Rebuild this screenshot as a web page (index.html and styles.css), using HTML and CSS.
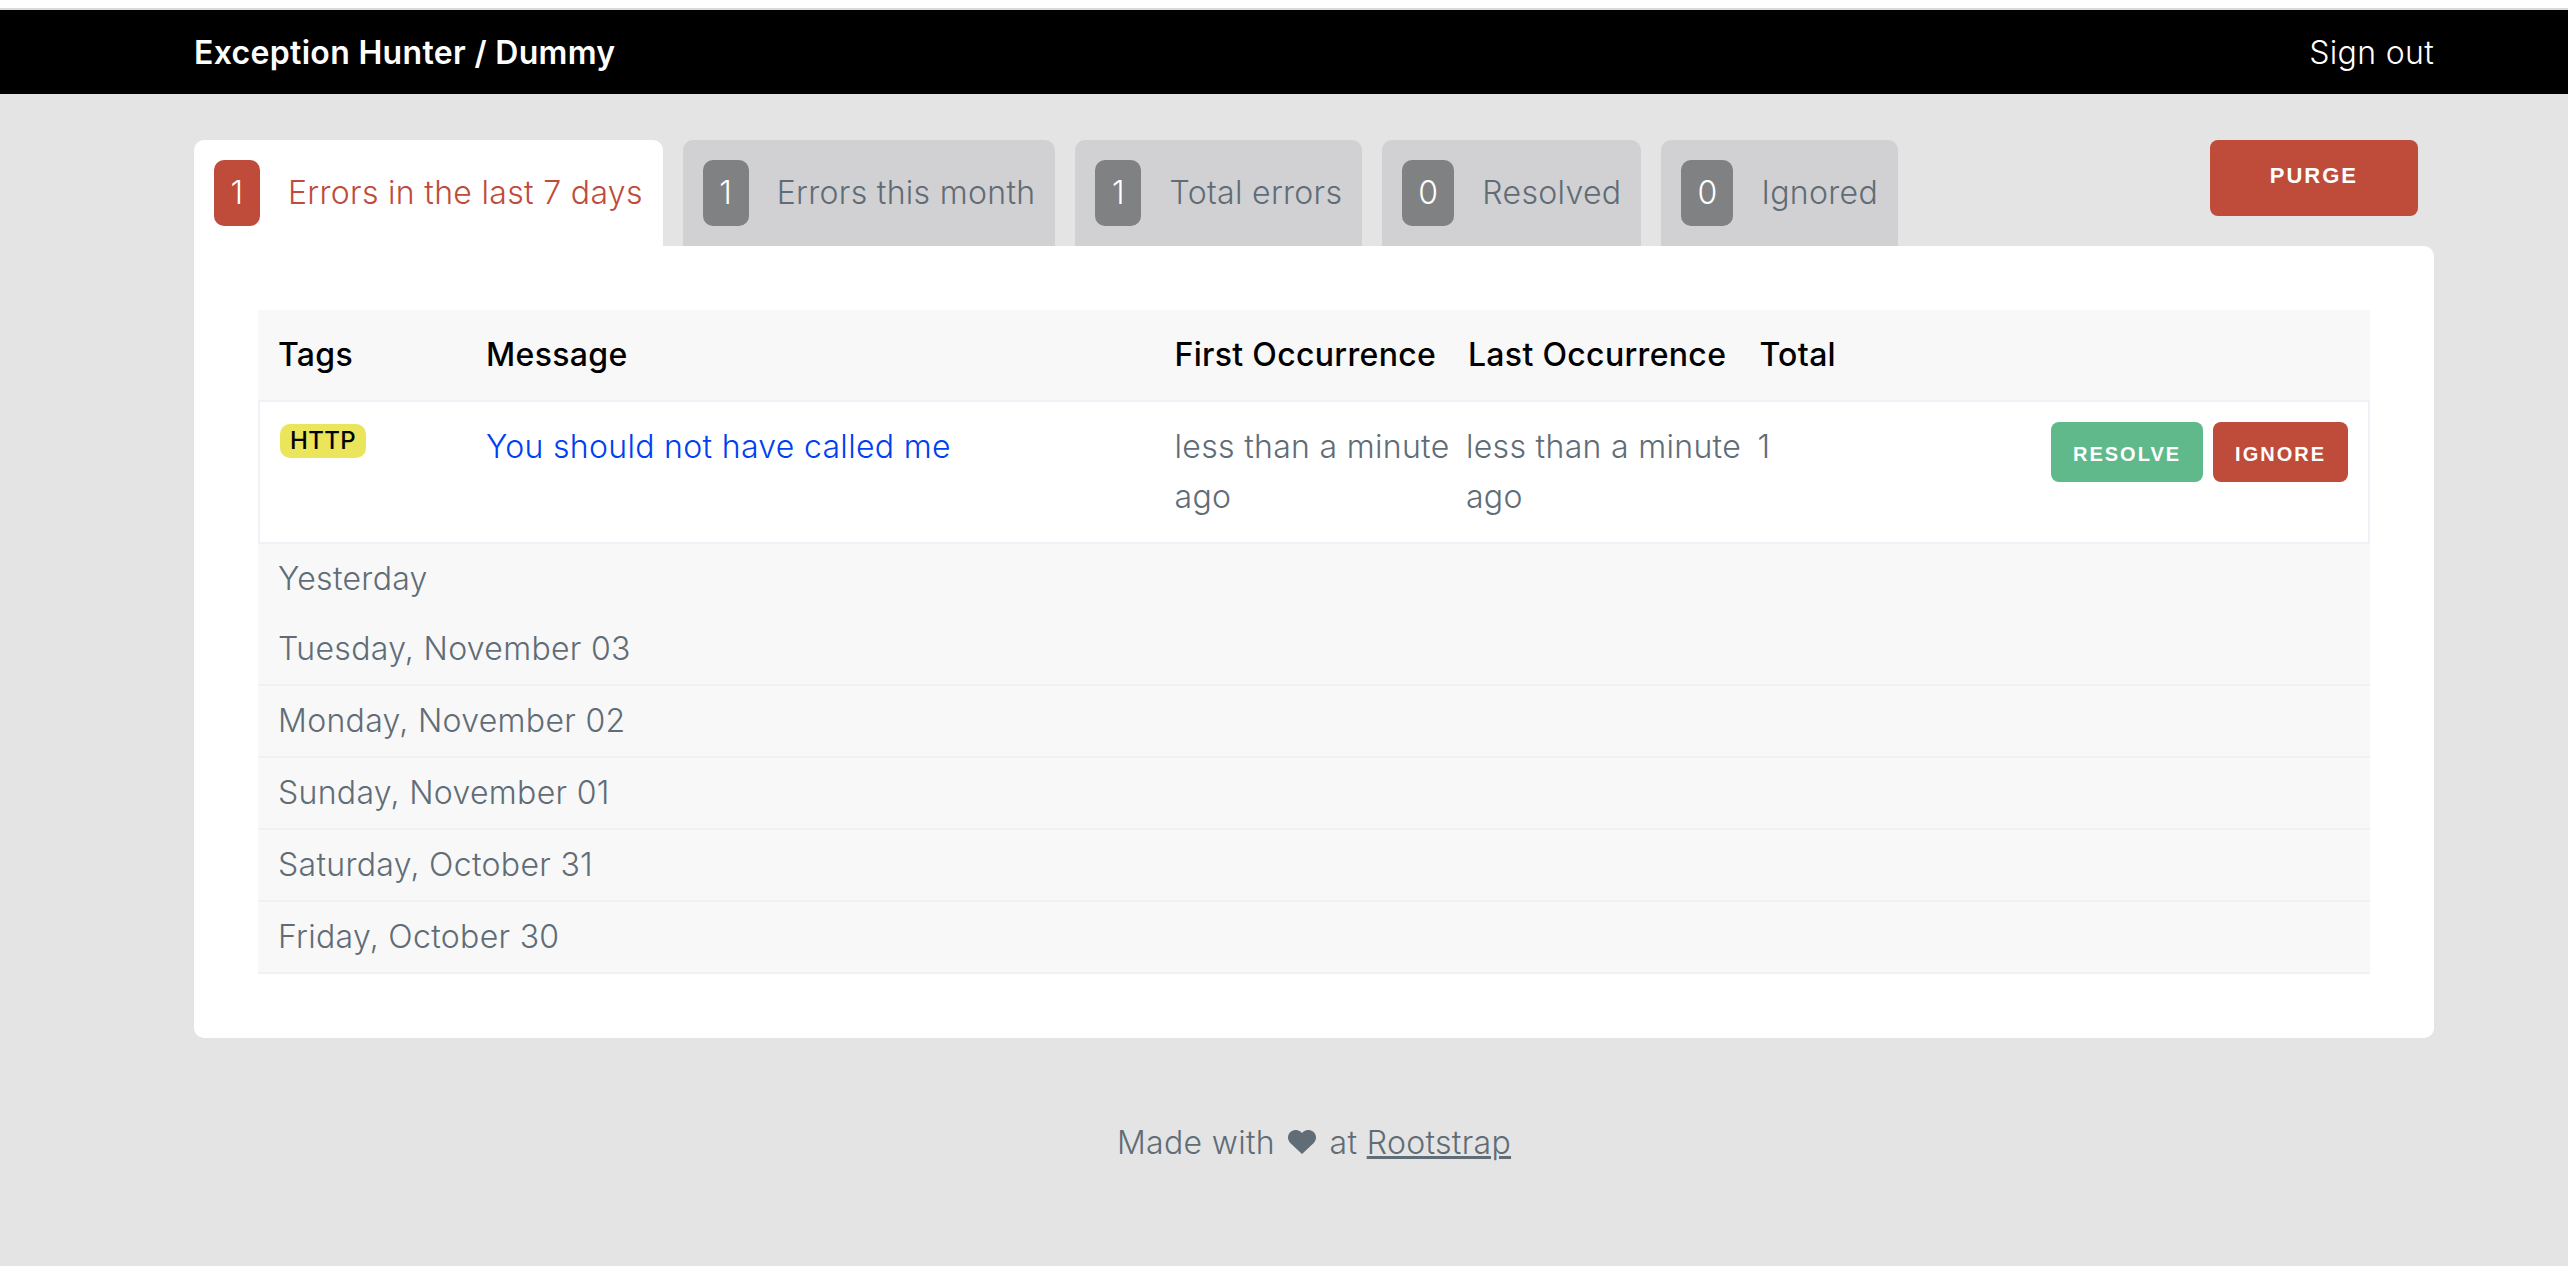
FILE: index.html
```html
<!DOCTYPE html>
<html lang="en">
<head>
  <meta charset="utf-8">
  <title>Exception Hunter / Dummy</title>
  <link rel="stylesheet" href="styles.css">
</head>
<body>
  <header class="topbar">
    <div class="container topbar-inner">
      <strong class="brand">Exception Hunter / Dummy</strong>
      <a class="sign-out" href="#">Sign out</a>
    </div>
  </header>

  <main class="container content">
    <div class="toolbar">
      <nav class="tabs">
        <a class="tab active" href="#"><span class="count">1</span><span>Errors in the last 7 days</span></a>
        <a class="tab" href="#"><span class="count">1</span><span>Errors this month</span></a>
        <a class="tab" href="#"><span class="count">1</span><span>Total errors</span></a>
        <a class="tab" href="#"><span class="count">0</span><span>Resolved</span></a>
        <a class="tab" href="#"><span class="count">0</span><span>Ignored</span></a>
      </nav>
      <button class="button purge" type="button">Purge</button>
    </div>

    <section class="panel">
      <table class="errors">
        <colgroup>
          <col class="col-tags">
          <col class="col-message">
          <col class="col-date">
          <col class="col-date">
          <col class="col-total">
          <col>
        </colgroup>
        <thead>
          <tr>
            <th>Tags</th>
            <th>Message</th>
            <th>First Occurrence</th>
            <th>Last Occurrence</th>
            <th>Total</th>
            <th></th>
          </tr>
        </thead>
        <tbody>
          <tr class="error">
            <td><span class="tag">HTTP</span></td>
            <td><a class="message" href="#">You should not have called me</a></td>
            <td>less than a minute ago</td>
            <td>less than a minute ago</td>
            <td>1</td>
            <td>
              <div class="actions">
                <button class="button small resolve" type="button">Resolve</button>
                <button class="button small" type="button">Ignore</button>
              </div>
            </td>
          </tr>
          <tr class="day plain"><td colspan="6">Yesterday</td></tr>
          <tr class="day"><td colspan="6">Tuesday, November 03</td></tr>
          <tr class="day"><td colspan="6">Monday, November 02</td></tr>
          <tr class="day"><td colspan="6">Sunday, November 01</td></tr>
          <tr class="day"><td colspan="6">Saturday, October 31</td></tr>
          <tr class="day"><td colspan="6">Friday, October 30</td></tr>
        </tbody>
      </table>
    </section>
  </main>

  <footer class="footer">
    Made with
    <svg class="heart" viewBox="0 0 28 24" role="img" aria-label="love"><path d="M14 24 2.5 13.2C-.8 9.900-.8 5 2.200 2.200 5.400-.8 10.200-.7 13 2.100l1 1 1-1c2.800-2.800 7.600-2.900 10.800.1 3 2.800 3 7.700-.3 11z"/></svg>
    at <a href="#">Rootstrap</a>
  </footer>
</body>
</html>
```

FILE: styles.css
```css
* {
  box-sizing: border-box;
}

body {
  display: flow-root;
  margin: 0;
  padding-left: 60px;
  min-height: 100vh;
  background: #e4e4e4;
  color: #606c76;
  font: 300 32px/50px Inter, "Liberation Sans", sans-serif;
  letter-spacing: .01em;
}

.container {
  max-width: 2240px;
  margin: 0 auto;
}

.topbar {
  margin: 8px 0 0 -60px;
  padding: 18px 0 16px 60px;
  border-top: 2px solid #dadadc;
  background: #000;
  box-shadow: 0 -8px 0 #fff;
}

.topbar-inner {
  display: flex;
  justify-content: space-between;
}

.brand {
  color: #fff;
  font-weight: 600;
}

.sign-out {
  color: #fff;
  text-decoration: none;
}

.content {
  padding-top: 46px;
}

.toolbar {
  display: flex;
  justify-content: space-between;
  align-items: flex-start;
  padding-right: 16px;
}

.tabs {
  display: flex;
  gap: 20px;
}

.tab {
  display: flex;
  align-items: center;
  gap: 28px;
  padding: 20px;
  border-radius: 10px 10px 0 0;
  background: #d1d1d3;
  color: #606c76;
  text-decoration: none;
}

.count {
  min-width: 46px;
  padding: 8px 16px;
  border-radius: 10px;
  background: #808182;
  color: #fff;
  text-align: center;
}

.tab.active {
  background: #fff;
  color: #bf4b3a;
}

.tab.active .count {
  background: #bf4b3a;
}

.button {
  border: 0;
  border-radius: 8px;
  background: #bf4b3a;
  color: #fff;
  font: 700 22px/24px "Liberation Sans", Arial, sans-serif;
  letter-spacing: 2px;
  text-transform: uppercase;
}

.purge {
  padding: 24px 60px 28px;
}

.small {
  padding: 20px 22px 16px;
  font-size: 20px;
}

.resolve {
  background: #5fb98b;
}

.panel {
  padding: 64px;
  border-radius: 0 10px 10px 10px;
  background: #fff;
}

.errors {
  width: 100%;
  table-layout: fixed;
  border-spacing: 0;
}

.col-tags {
  width: 228px;
}

.col-message {
  width: 32.6%;
}

.col-date {
  width: 13.8%;
}

.col-total {
  width: 8%;
}

.errors th,
.errors td {
  padding: 20px 0;
  border-bottom: 2px solid #f0f0f6;
  text-align: left;
  vertical-align: top;
}

.errors th {
  background: #f8f8f8;
  color: #000;
  font-weight: 500;
}

.errors th:first-child,
.errors td:first-child {
  padding-left: 20px;
}

.errors th:nth-child(n + 4) {
  padding-left: 2px;
}

.error td:first-child {
  border-left: 2px solid #f0f0f6;
}

.error td:last-child {
  padding-right: 20px;
  border-right: 2px solid #f0f0f6;
}

.errors .day td {
  padding: 10px 20px;
  background: #f8f8f8;
}

.errors .plain td {
  border-bottom: 0;
}

.tag {
  display: block;
  width: fit-content;
  margin-top: 2px;
  padding: 0 10px;
  border-radius: 10px;
  background: #ebe55c;
  color: #000;
  font-size: 24px;
  font-weight: 500;
  line-height: 34px;
}

.message {
  color: #0040f0;
  text-decoration: none;
}

.actions {
  display: flex;
  justify-content: flex-end;
  gap: 10px;
}

.footer {
  padding: 80px 0;
  text-align: center;
}

.footer a {
  color: inherit;
}

.heart {
  width: 28px;
  height: 24px;
  margin: 0 4px;
  fill: #606c76;
}
```
